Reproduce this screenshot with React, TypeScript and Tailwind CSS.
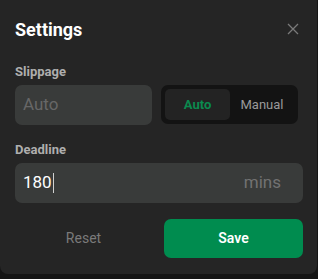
import React from "react";

export default function App() {
  return (
    <div className="w-[318px] h-[279px] bg-[#151515]" style={{ fontFamily: "Roboto, 'Noto Sans', sans-serif" }}>
      <div className="w-[317px] h-[274px] bg-[#252525] rounded-b-lg pl-[15px] pr-[14px] pt-[17px]">
        <div className="flex items-center justify-between h-[26px]">
          <span className="text-[18px] font-bold text-white leading-[26px]">Settings</span>
          <svg width="12" height="12" viewBox="0 0 12 12" className="mr-[4px] -mt-[3px]">
            <path d="M1 1L11 11M11 1L1 11" stroke="#7a7a7a" strokeWidth="1.3" />
          </svg>
        </div>
        <div className="mt-[21px] text-[13px] leading-[16px] font-bold text-[#aeaeae]">Slippage</div>
        <div className="mt-[5px] flex gap-[9px]">
          <div className="w-[137px] h-[40px] rounded-[7px] bg-[#393b3a] flex items-center pl-[8px] text-[17px] text-[#676767]">
            Auto
          </div>
          <div className="w-[137px] h-[39px] rounded-[7px] bg-[#131313] p-[4px] flex">
            <div className="w-[65px] h-[31px] rounded-[5px] bg-[#232323] flex items-center justify-center text-[13px] font-bold text-[#0b8a4f]">
              Auto
            </div>
            <div className="flex-1 flex items-center justify-center text-[13px] text-[#9a9a9a]">Manual</div>
          </div>
        </div>
        <div className="mt-[17px] text-[13px] leading-[16px] font-bold text-[#aeaeae]">Deadline</div>
        <div className="mt-[5px] h-[40px] rounded-[7px] bg-[#393b3a] flex items-center pl-[8px] pr-[22px]">
          <span className="text-[17px] text-white">180</span>
          <span className="w-[1.5px] h-[20px] bg-[#d0d0d0] ml-[1px]" />
          <span className="ml-auto text-[17px] text-[#727272]">mins</span>
        </div>
        <div className="mt-[16px] flex gap-[12px]">
          <button className="w-[137px] h-[39px] flex items-center justify-center text-[14px] text-[#7a7a7a]">Reset</button>
          <button className="w-[139px] h-[39px] rounded-[7px] bg-[#008c4f] flex items-center justify-center text-[14px] font-semibold text-white">
            Save
          </button>
        </div>
      </div>
    </div>
  );
}
